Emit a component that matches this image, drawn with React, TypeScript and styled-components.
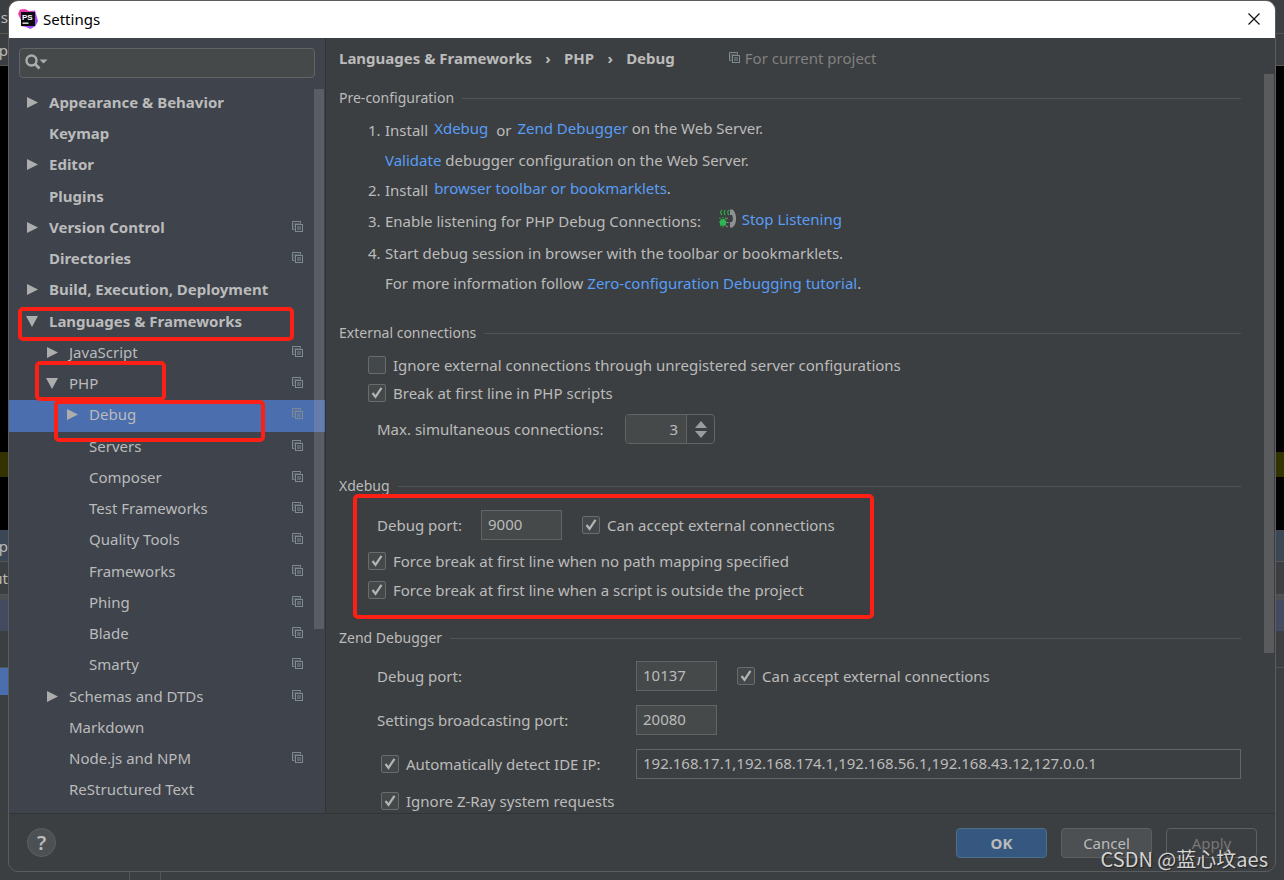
import React from "react";
import styled, { createGlobalStyle } from "styled-components";

const color = {
  panel: "#3c3f41",
  side: "#3e434c",
  text: "#bbbbbb",
  muted: "#808080",
  link: "#589df6",
  field: "#45494a",
  border: "#646464",
  select: "#4b6eaf",
  mark: "#ff2015",
};

const Global = createGlobalStyle`
  *, *::before, *::after { box-sizing: border-box; }
  body { margin: 0; background: ${color.panel}; }
  body, button, input { font-family: "Noto Sans", "Noto Sans CJK SC", sans-serif; font-size: 15px; line-height: 20px; color: ${color.text}; }
  ul, ol { list-style: none; margin: 0; padding: 0; }
  h1, h2 { margin: 0; font-weight: 400; }
`;

const Screen = styled.div`
  position: relative;
  display: flex;
  min-height: 100vh;
  padding: 0 8px 8px;
  overflow: hidden;
`;

/* The editor window that shows round the dialog */
const Backdrop = styled.div`
  position: absolute;
  inset: 0;
  display: flex;
  flex-direction: column;
`;
const Band = styled.div<{ $h: number; $bg: string; $line?: boolean }>`
  display: flex;
  align-items: center;
  height: ${(p) => p.$h}px;
  flex: none;
  background: ${(p) => p.$bg};
  border-bottom: ${(p) => (p.$line ? "1px solid #555555" : "0")};
  overflow: hidden;
  white-space: nowrap;
`;
const EdgeText = styled.span`
  display: flex;
  justify-content: flex-end;
  width: 8px;
`;
const EdgeSelection = styled.span`
  width: 50%;
  height: 100%;
  background: ${color.select};
`;
const StatusBar = styled.div`
  flex: 1;
  display: flex;
  padding-left: 129px;
  &::before {
    content: "";
    width: 32px;
    border: solid #515456;
    border-width: 0 1px;
  }
`;

const Dialog = styled.section`
  position: relative;
  flex: 1;
  min-width: 0;
  display: flex;
  flex-direction: column;
  border: 1px solid #5a5c5e;
  border-radius: 10px;
  background: ${color.panel};
  overflow: hidden;
`;
const TitleBar = styled.header`
  display: flex;
  align-items: center;
  height: 37px;
  padding: 0 15px 2px 9px;
  gap: 5px;
  background: #ffffff;
  color: #000000;
`;
const Title = styled.h1`
  flex: 1;
  font-size: 15px;
  line-height: 20px;
`;
const CloseButton = styled.button`
  display: flex;
  padding: 0;
  border: 0;
  background: none;
`;
const Body = styled.div`
  flex: 1;
  display: flex;
  min-height: 0;
`;

const Sidebar = styled.nav`
  position: relative;
  flex: none;
  width: 317px;
  padding-top: 10px;
  background: ${color.side};
  border-right: 1px solid #323232;
`;
const SearchBox = styled.label`
  display: flex;
  align-items: center;
  gap: 4px;
  height: 30px;
  margin: 0 10px;
  padding: 0 4px 2px;
  border: 1px solid ${color.border};
  border-radius: 4px;
  background: ${color.field};
`;
const SearchInput = styled.input`
  flex: 1;
  min-width: 0;
  padding: 0;
  border: 0;
  outline: 0;
  background: none;
`;
const Tree = styled.ul`
  margin-top: 10px;
`;
const Node = styled.li<{ $level: number; $selected?: boolean }>`
  position: relative;
  display: flex;
  align-items: center;
  height: 31px;
  padding: 0 21px 4px ${(p) => 17 + p.$level * 20}px;
  font-weight: ${(p) => (p.$level === 0 ? 700 : 400)};
  background: ${(p) => (p.$selected ? color.select : "transparent")};
  &:nth-child(4n + 3) { height: 32px; }
`;
const Twisty = styled.span`
  display: flex;
  width: 23px;
`;
const NodeLabel = styled.span`
  flex: 1;
`;
const Mark = styled.span<{ $top: number; $right: number; $bottom: number; $left: number }>`
  position: absolute;
  z-index: 2;
  top: ${(p) => p.$top}px;
  right: ${(p) => p.$right}px;
  bottom: ${(p) => p.$bottom}px;
  left: ${(p) => p.$left}px;
  border: 4px solid ${color.mark};
  border-radius: 5px;
  pointer-events: none;
`;
const ScrollThumb = styled.span<{ $top: number; $height: number }>`
  position: absolute;
  top: ${(p) => p.$top}px;
  right: 1px;
  width: 10px;
  height: ${(p) => p.$height}px;
  background: rgba(166, 166, 166, 0.28);
`;

const Main = styled.main`
  position: relative;
  flex: 1;
  min-width: 0;
  padding: 0 34px 0 13px;
`;
const Crumbs = styled.div`
  display: flex;
  align-items: center;
  height: 42px;
  margin-bottom: 8px;
  padding-bottom: 2px;
  font-weight: 700;
`;
const CrumbArrow = styled.span`
  width: 32px;
  text-align: center;
`;
const Scope = styled.span`
  display: flex;
  align-items: center;
  gap: 4px;
  margin-left: 54px;
  font-weight: 400;
  color: ${color.muted};
`;

const Section = styled.section<{ $gap: number }>`
  margin-bottom: ${(p) => p.$gap}px;
`;
const SectionTitle = styled.h2`
  display: flex;
  align-items: center;
  gap: 8px;
  font-size: 14px;
  line-height: 20px;
  &::after {
    content: "";
    flex: 1;
    height: 1px;
    background: #515456;
  }
`;
const Steps = styled.ol`
  padding: 7px 0 0 29px;
`;
const Step = styled.li<{ $h: number }>`
  display: flex;
  align-items: center;
  height: ${(p) => p.$h}px;
  white-space: pre;
`;
const StepNumber = styled.span`
  width: 17px;
`;
const LinkPanel = styled.span`
  display: flex;
  align-items: center;
  gap: 5px;
  margin-left: 6px;
  padding-bottom: 4px;
`;
const Link = styled.a`
  color: ${color.link};
  text-decoration: none;
`;

const Group = styled.div`
  position: relative;
  padding-top: 8px;
`;
const Row = styled.div<{ $h: number; $indent: number }>`
  display: flex;
  align-items: center;
  height: ${(p) => p.$h}px;
  padding-left: ${(p) => p.$indent}px;
`;
const FieldLabel = styled.label<{ $w: number }>`
  flex: none;
  width: ${(p) => p.$w}px;
`;
const TextField = styled.input<{ $wide?: boolean }>`
  flex: ${(p) => (p.$wide ? "1" : "none")};
  min-width: 0;
  width: 81px;
  height: 30px;
  margin-right: ${(p) => (p.$wide ? 0 : 20)}px;
  padding: 0 6px 2px;
  border: 1px solid ${color.border};
  background: ${(p) => (p.$wide ? "transparent" : color.field)};
  outline: 0;
`;
const Spinner = styled.div`
  display: flex;
  width: 90px;
  height: 30px;
  border: 1px solid ${color.border};
  border-radius: 4px;
  overflow: hidden;
`;
const SpinnerInput = styled.input`
  flex: 1;
  min-width: 0;
  padding: 0 8px;
  border: 0;
  border-right: 1px solid ${color.border};
  outline: 0;
  background: ${color.field};
  text-align: right;
  appearance: textfield;
  &::-webkit-inner-spin-button { appearance: none; margin: 0; }
`;
const SpinnerButtons = styled.div`
  display: flex;
  flex-direction: column;
  justify-content: center;
  gap: 3px;
  width: 27px;
`;
const SpinnerButton = styled.button`
  display: flex;
  justify-content: center;
  padding: 0;
  border: 0;
  background: none;
`;

const CheckLabel = styled.label`
  display: flex;
  align-items: center;
  gap: 7px;
  white-space: nowrap;
`;
const CheckBox = styled.span`
  display: grid;
  width: 18px;
  height: 18px;
  & > * { grid-area: 1 / 1; }
  & > svg { pointer-events: none; visibility: hidden; }
  & > input:checked + svg { visibility: visible; }
`;
const CheckInput = styled.input`
  appearance: none;
  width: 18px;
  height: 18px;
  margin: 0;
  border: 1px solid #6b6b6b;
  border-radius: 2px;
  background: #43494a;
`;

const Footer = styled.footer`
  display: flex;
  align-items: center;
  gap: 14px;
  height: 58px;
  padding: 0 18px;
  border-top: 1px solid #323537;
`;
const HelpButton = styled.button`
  width: 29px;
  height: 29px;
  margin-right: auto;
  padding: 0;
  border: 1px solid #5e6060;
  border-radius: 50%;
  background: #4c5052;
  font-size: 20px;
  font-weight: 600;
`;
const Button = styled.button<{ $primary?: boolean }>`
  width: 91px;
  height: 30px;
  padding: 0;
  border: 1px solid ${(p) => (p.$primary ? "#4c708c" : "#5e6060")};
  border-radius: 4px;
  background: ${(p) => (p.$primary ? "#365880" : "#4c5052")};
  font-weight: ${(p) => (p.$primary ? 700 : 400)};
  &:disabled { background: transparent; color: #777777; }
`;
const Watermark = styled.div`
  position: absolute;
  right: 16px;
  bottom: 7px;
  font-family: "Noto Sans CJK SC", sans-serif;
  font-size: 20px;
  line-height: 28px;
  color: #d4d4d4;
  text-shadow: 1px 1px 1px #222222;
`;

const AppIcon = () => (
  <svg width="20" height="20" viewBox="0 0 20 20" aria-hidden="true">
    <defs>
      <linearGradient id="ps" x1="0" y1="0" x2="1" y2="1">
        <stop offset="0" stopColor="#ff318c" />
        <stop offset="0.3" stopColor="#e03fc0" />
        <stop offset="0.5" stopColor="#b04df0" />
        <stop offset="1" stopColor="#8a4dff" />
      </linearGradient>
    </defs>
    <path d="M2 .5L7 0l4 2 6-.5 1.500 5L20 12l-2.500 5-5 3L8 18l-5-1 .5-5L0 5z" fill="url(#ps)" />
    <rect x="3" y="3" width="14" height="14" fill="#0b0b10" />
    <rect x="4.500" y="13.500" width="6" height="1.300" fill="#fff" />
    <text x="4" y="10.500" fontFamily="Liberation Sans" fontSize="8" fontWeight="700" fill="#fff">PS</text>
  </svg>
);

const CloseIcon = () => (
  <svg width="12" height="12" viewBox="0 0 12 12" stroke="#111" strokeWidth="1.2" aria-hidden="true">
    <path d="M.5.5l11 11M11.500.5l-11 11" />
  </svg>
);

const SearchIcon = () => (
  <svg width="24" height="18" viewBox="0 0 24 18" fill="none" aria-hidden="true">
    <circle cx="7.500" cy="7.500" r="5" stroke="#aaadaf" strokeWidth="2.400" />
    <path d="M11 11l4.500 4.500" stroke="#aaadaf" strokeWidth="2.800" />
    <path d="M15.500 6.500h8l-4 4z" fill="#aaadaf" />
  </svg>
);

const ProjectIcon = () => (
  <svg width="12" height="12" viewBox="0 0 12 12" fill="none" stroke="#7f8b91" aria-hidden="true">
    <path d="M2.500 8.500h-2v-8h8v2" />
    <path d="M2 7.500V2.500h6" strokeOpacity="0.45" />
    <rect x="3.500" y="3.500" width="7" height="7" />
    <path d="M5 5.500h4M5 8.500h4" strokeOpacity="0.5" />
    <path d="M5 7h4" />
  </svg>
);

const Arrow = ({ open }: { open?: boolean }) => (
  <svg width="12" height="12" viewBox="0 0 12 12" fill="#adadad" aria-hidden="true">
    <path d={open ? "M0 1h12L6 12z" : "M1 1v11l11-5.500z"} />
  </svg>
);

const ListenIcon = () => (
  <svg width="18" height="20" viewBox="0 0 18 20" fill="none" aria-hidden="true">
    <g stroke="#2fa84c" strokeWidth="1.200">
      <path d="M3 1C1.200 2.500 1.200 4.500 3 6M6.500 1C4.700 2.500 4.700 4.500 6.500 6M10 1C8.200 2.500 8.200 4.500 10 6" />
      <path d="M.5 8.500l7 9M7 8.500l-6 9M0 13h4M4 8v11" strokeDasharray="1.500 .7" />
    </g>
    <circle cx="4" cy="13.500" r="3.200" fill="#2fb552" />
    <path d="M7 10l2-1M7.500 13.500h2M7 17l2 1" stroke="#8b8b8b" />
    <path d="M11 0.500h2.500c4.500 3 5 14 0 18H11V13h2c1.200-2 1.200-5 0-7h-2z" fill="#8e9192" />
  </svg>
);

type CheckProps = { label: string; checked?: boolean };
const Check = ({ label, checked }: CheckProps) => (
  <CheckLabel>
    <CheckBox>
      <CheckInput type="checkbox" defaultChecked={checked} />
      <svg width="18" height="18" viewBox="0 0 18 18" fill="none" aria-hidden="true">
        <path d="M4.500 9l3 3.800 6-9" stroke="#b4b4b4" strokeWidth="2.200" />
      </svg>
    </CheckBox>
    {label}
  </CheckLabel>
);

type TreeNode = {
  label: string;
  level: number;
  arrow?: "open" | "closed";
  project?: boolean;
  selected?: boolean;
  mark?: [number, number, number, number];
};
const nodes: TreeNode[] = [
  { label: "Appearance & Behavior", level: 0, arrow: "closed" },
  { label: "Keymap", level: 0 },
  { label: "Editor", level: 0, arrow: "closed" },
  { label: "Plugins", level: 0 },
  { label: "Version Control", level: 0, arrow: "closed", project: true },
  { label: "Directories", level: 0, project: true },
  { label: "Build, Execution, Deployment", level: 0, arrow: "closed" },
  { label: "Languages & Frameworks", level: 0, arrow: "open", mark: [0, 31, -3, 9] },
  { label: "JavaScript", level: 1, arrow: "closed", project: true },
  { label: "PHP", level: 1, arrow: "open", project: true, mark: [-8, 159, -1, 26] },
  { label: "Debug", level: 2, arrow: "closed", project: true, selected: true, mark: [0, 60, -10, 45] },
  { label: "Servers", level: 2, project: true },
  { label: "Composer", level: 2, project: true },
  { label: "Test Frameworks", level: 2, project: true },
  { label: "Quality Tools", level: 2, project: true },
  { label: "Frameworks", level: 2, project: true },
  { label: "Phing", level: 2, project: true },
  { label: "Blade", level: 2, project: true },
  { label: "Smarty", level: 2, project: true },
  { label: "Schemas and DTDs", level: 1, arrow: "closed", project: true },
  { label: "Markdown", level: 1 },
  { label: "Node.js and NPM", level: 1, project: true },
  { label: "ReStructured Text", level: 1 },
];

export default function App() {
  return (
    <Screen>
      <Global />
      <Backdrop aria-hidden="true">
        <Band $h={34} $bg={color.panel} $line><EdgeText>s</EdgeText></Band>
        <Band $h={32} $bg={color.panel} $line><EdgeText>t.p</EdgeText></Band>
        <Band $h={386} $bg="#000000" />
        <Band $h={25} $bg="#333300" />
        <Band $h={53} $bg="#000000" />
        <Band $h={32} $bg="#3b4754" $line><EdgeText>p</EdgeText></Band>
        <Band $h={33} $bg={color.panel} $line><EdgeText>ut</EdgeText></Band>
        <Band $h={5} $bg="#4d5052" />
        <Band $h={31} $bg="#424b5f" />
        <Band $h={37} $bg={color.panel} $line />
        <Band $h={27} $bg={color.panel}><EdgeSelection /></Band>
        <StatusBar />
      </Backdrop>

      <Dialog role="dialog" aria-labelledby="title">
        <TitleBar>
          <AppIcon />
          <Title id="title">Settings</Title>
          <CloseButton aria-label="Close"><CloseIcon /></CloseButton>
        </TitleBar>
        <Body>
          <Sidebar>
            <SearchBox>
              <SearchIcon />
              <SearchInput type="search" aria-label="Search settings" />
            </SearchBox>
            <Tree role="tree">
              {nodes.map((n) => (
                <Node key={n.label} role="treeitem" aria-selected={!!n.selected} $level={n.level} $selected={n.selected}>
                  <Twisty>{n.arrow && <Arrow open={n.arrow === "open"} />}</Twisty>
                  <NodeLabel>{n.label}</NodeLabel>
                  {n.project && <ProjectIcon />}
                  {n.mark && <Mark $top={n.mark[0]} $right={n.mark[1]} $bottom={n.mark[2]} $left={n.mark[3]} />}
                </Node>
              ))}
            </Tree>
            <ScrollThumb $top={51} $height={540} />
          </Sidebar>

          <Main>
            <Crumbs>
              Languages &amp; Frameworks<CrumbArrow>›</CrumbArrow>PHP<CrumbArrow>›</CrumbArrow>Debug
              <Scope><ProjectIcon />For current project</Scope>
            </Crumbs>

            <Section $gap={26}>
              <SectionTitle>Pre-configuration</SectionTitle>
              <Steps>
                <Step $h={30}>
                  <StepNumber>1.</StepNumber>Install
                  <LinkPanel><Link href="#xdebug">Xdebug</Link></LinkPanel>
                  {"  or"}
                  <LinkPanel><span><Link href="#zend">Zend Debugger</Link> on the Web Server.</span></LinkPanel>
                </Step>
                <Step $h={30}>
                  <StepNumber />
                  <Link href="#validate">Validate</Link>{" debugger configuration on the Web Server."}
                </Step>
                <Step $h={30}>
                  <StepNumber>2.</StepNumber>Install
                  <LinkPanel><span><Link href="#bookmarklets">browser toolbar or bookmarklets</Link>.</span></LinkPanel>
                </Step>
                <Step $h={32}>
                  <StepNumber>3.</StepNumber>{"Enable listening for PHP Debug Connections:   "}
                  <LinkPanel><ListenIcon /><Link href="#stop">Stop Listening</Link></LinkPanel>
                </Step>
                <Step $h={32}>
                  <StepNumber>4.</StepNumber>Start debug session in browser with the toolbar or bookmarklets.
                </Step>
                <Step $h={28}>
                  <StepNumber />
                  {"For more information follow "}<Link href="#tutorial">Zero-configuration Debugging tutorial</Link>.
                </Step>
              </Steps>
            </Section>

            <Section $gap={25}>
              <SectionTitle>External connections</SectionTitle>
              <Group>
                <Row $h={28} $indent={29}>
                  <Check label="Ignore external connections through unregistered server configurations" />
                </Row>
                <Row $h={28} $indent={29}><Check checked label="Break at first line in PHP scripts" /></Row>
                <Row $h={44} $indent={38}>
                  <FieldLabel htmlFor="max" $w={248}>Max. simultaneous connections:</FieldLabel>
                  <Spinner>
                    <SpinnerInput id="max" type="number" defaultValue={3} />
                    <SpinnerButtons>
                      <SpinnerButton aria-label="Increase">
                        <svg width="12" height="7" viewBox="0 0 12 7"><path d="M0 7h12L6 0z" fill="#9a9da0" /></svg>
                      </SpinnerButton>
                      <SpinnerButton aria-label="Decrease">
                        <svg width="12" height="7" viewBox="0 0 12 7"><path d="M0 0h12L6 7z" fill="#9a9da0" /></svg>
                      </SpinnerButton>
                    </SpinnerButtons>
                  </Spinner>
                </Row>
              </Group>
            </Section>

            <Section $gap={24}>
              <SectionTitle>Xdebug</SectionTitle>
              <Group>
                <Row $h={42} $indent={38}>
                  <FieldLabel htmlFor="xport" $w={104}>Debug port:</FieldLabel>
                  <TextField id="xport" defaultValue="9000" />
                  <Check checked label="Can accept external connections" />
                </Row>
                <Row $h={29} $indent={29}><Check checked label="Force break at first line when no path mapping specified" /></Row>
                <Row $h={29} $indent={29}><Check checked label="Force break at first line when a script is outside the project" /></Row>
                <Mark $top={-2} $right={367} $bottom={-15} $left={14} />
              </Group>
            </Section>

            <Section $gap={0}>
              <SectionTitle>Zend Debugger</SectionTitle>
              <Row $h={56} $indent={38}>
                <FieldLabel htmlFor="zport" $w={259}>Debug port:</FieldLabel>
                <TextField id="zport" defaultValue="10137" />
                <Check checked label="Can accept external connections" />
              </Row>
              <Row $h={32} $indent={38}>
                <FieldLabel htmlFor="bport" $w={259}>Settings broadcasting port:</FieldLabel>
                <TextField id="bport" defaultValue="20080" />
              </Row>
              <Row $h={56} $indent={42}>
                <FieldLabel as="div" $w={255}><Check checked label="Automatically detect IDE IP:" /></FieldLabel>
                <TextField $wide aria-label="IDE IP" defaultValue="192.168.17.1,192.168.174.1,192.168.56.1,192.168.43.12,127.0.0.1" />
              </Row>
              <Row $h={18} $indent={42}><Check checked label="Ignore Z-Ray system requests" /></Row>
            </Section>
            <ScrollThumb $top={36} $height={579} />
          </Main>
        </Body>
        <Footer>
          <HelpButton aria-label="Help">?</HelpButton>
          <Button $primary>OK</Button>
          <Button>Cancel</Button>
          <Button disabled>Apply</Button>
        </Footer>
      </Dialog>
      <Watermark>CSDN @蓝心坟aes</Watermark>
    </Screen>
  );
}
